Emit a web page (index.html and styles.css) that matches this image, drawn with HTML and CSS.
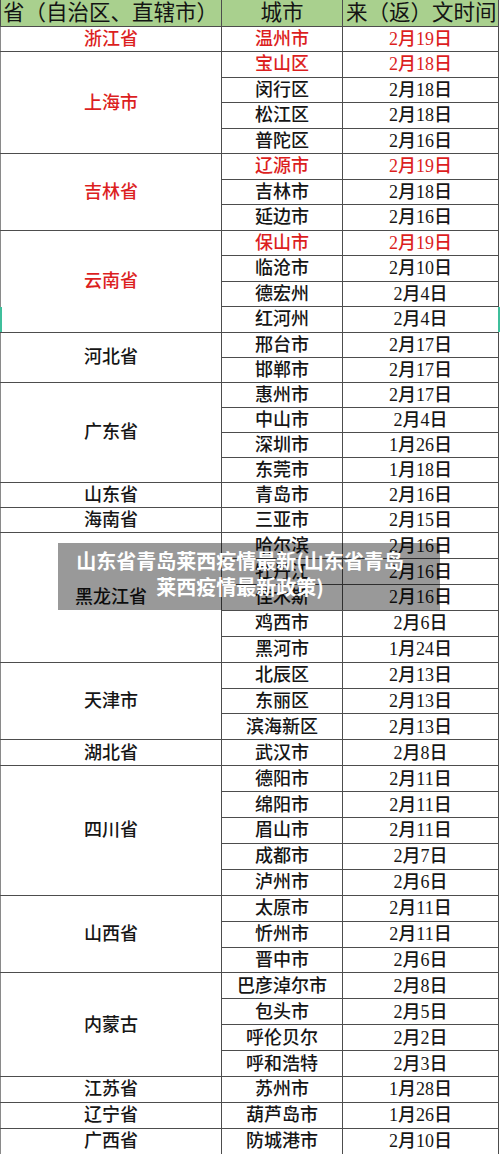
FILE: index.html
```html
<!DOCTYPE html>
<html lang="zh-CN">
<head>
<meta charset="utf-8">
<title>返工时间表</title>
<link rel="stylesheet" href="styles.css">
</head>
<body>
<div class="sheet">
  <table class="grid">
    <colgroup>
      <col class="c1">
      <col class="c2">
      <col class="c3">
    </colgroup>
    <thead>
      <tr class="head">
        <th class="h-prov">省（自治区、直辖市）</th>
        <th>城市</th>
        <th class="h-date">来（返）文时间</th>
      </tr>
    </thead>
    <tbody class="g1">
      <tr><td class="prov red">浙江省</td><td class="red">温州市</td><td class="red">2月19日</td></tr>
      <tr><td class="prov red" rowspan="4">上海市</td><td class="red">宝山区</td><td class="red">2月18日</td></tr>
      <tr><td>闵行区</td><td>2月18日</td></tr>
      <tr><td>松江区</td><td>2月18日</td></tr>
      <tr><td>普陀区</td><td>2月16日</td></tr>
      <tr><td class="prov red" rowspan="3">吉林省</td><td class="red">辽源市</td><td class="red">2月19日</td></tr>
      <tr><td>吉林市</td><td>2月18日</td></tr>
      <tr><td>延边市</td><td>2月16日</td></tr>
      <tr><td class="prov red" rowspan="4">云南省</td><td class="red">保山市</td><td class="red">2月19日</td></tr>
      <tr><td>临沧市</td><td>2月10日</td></tr>
      <tr><td>德宏州</td><td>2月4日</td></tr>
      <tr><td>红河州</td><td>2月4日</td></tr>
    </tbody>
    <tbody class="g2">
      <tr><td class="prov" rowspan="2">河北省</td><td>邢台市</td><td>2月17日</td></tr>
      <tr><td>邯郸市</td><td>2月17日</td></tr>
      <tr><td class="prov" rowspan="4">广东省</td><td>惠州市</td><td>2月17日</td></tr>
      <tr><td>中山市</td><td>2月4日</td></tr>
      <tr><td>深圳市</td><td>1月26日</td></tr>
      <tr><td>东莞市</td><td>1月18日</td></tr>
      <tr><td class="prov">山东省</td><td>青岛市</td><td>2月16日</td></tr>
      <tr><td class="prov">海南省</td><td>三亚市</td><td>2月15日</td></tr>
    </tbody>
    <tbody class="g3">
      <tr><td class="prov" rowspan="5">黑龙江省</td><td>哈尔滨</td><td>2月16日</td></tr>
      <tr><td>牡丹江</td><td>2月16日</td></tr>
      <tr><td>佳木斯</td><td>2月16日</td></tr>
      <tr><td>鸡西市</td><td>2月6日</td></tr>
      <tr><td>黑河市</td><td>1月24日</td></tr>
      <tr><td class="prov" rowspan="3">天津市</td><td>北辰区</td><td>2月13日</td></tr>
      <tr><td>东丽区</td><td>2月13日</td></tr>
      <tr><td>滨海新区</td><td>2月13日</td></tr>
      <tr><td class="prov">湖北省</td><td>武汉市</td><td>2月8日</td></tr>
      <tr><td class="prov" rowspan="5">四川省</td><td>德阳市</td><td>2月11日</td></tr>
      <tr><td>绵阳市</td><td>2月11日</td></tr>
      <tr><td>眉山市</td><td>2月11日</td></tr>
      <tr><td>成都市</td><td>2月7日</td></tr>
      <tr><td>泸州市</td><td>2月6日</td></tr>
      <tr><td class="prov" rowspan="3">山西省</td><td>太原市</td><td>2月11日</td></tr>
      <tr><td>忻州市</td><td>2月11日</td></tr>
      <tr><td>晋中市</td><td>2月6日</td></tr>
      <tr><td class="prov" rowspan="4">内蒙古</td><td>巴彦淖尔市</td><td>2月8日</td></tr>
      <tr><td>包头市</td><td>2月5日</td></tr>
      <tr><td>呼伦贝尔</td><td>2月2日</td></tr>
      <tr><td>呼和浩特</td><td>2月3日</td></tr>
      <tr><td class="prov">江苏省</td><td>苏州市</td><td>1月28日</td></tr>
      <tr><td class="prov">辽宁省</td><td>葫芦岛市</td><td>1月26日</td></tr>
      <tr><td class="prov">广西省</td><td>防城港市</td><td>2月10日</td></tr>
    </tbody>
  </table>

  <span class="sel-mark sel-left"></span>
  <span class="sel-mark sel-right"></span>

  <div class="caption">山东省青岛莱西疫情最新(山东省青岛<br>莱西疫情最新政策)</div>
</div>
</body>
</html>
```

FILE: styles.css
```css
* {
  box-sizing: border-box;
}

html, body {
  margin: 0;
  padding: 0;
  background: #ffffff;
}

body {
  width: 500px;
  height: 1154px;
  overflow: hidden;
  font-family: "Liberation Serif", "Noto Sans CJK SC", serif;
  color: #161616;
}

.sheet {
  position: relative;
  width: 500px;
  height: 1154px;
}

.grid {
  border-collapse: collapse;
  table-layout: fixed;
  width: 498px;
}

.c1 { width: 221px; }
.c2 { width: 121px; }
.c3 { width: 156px; }

.grid td,
.grid th {
  border: 1px solid #4d4d4d;
  padding: 0;
  text-align: center;
  vertical-align: middle;
  white-space: nowrap;
  overflow: hidden;
  font-size: 18px;
  line-height: 20px;
  font-weight: 500;
}

.grid td:first-child {
  border-left-color: #8a8a8a;
}

.head {
  height: 26px;
}

.head th {
  background: #a9d08e;
  border-top: none;
  font-size: 21.5px;
  line-height: 24px;
  font-weight: normal;
  color: #141414;
}

.head .h-prov {
  text-align: left;
  padding-left: 2px;
}

.head .h-date {
  text-align: left;
  padding-left: 3px;
}

.g1 tr { height: 25.5px; }
.g2 tr { height: 25.1px; }
.g3 tr { height: 25.9px; }

.red {
  color: #dc1f1f;
}

.sel-mark {
  position: absolute;
  top: 307px;
  width: 2px;
  height: 25px;
  background: #3fbf9c;
}

.sel-left { left: 0; }
.sel-right { left: 498px; }

.caption {
  position: absolute;
  left: 58px;
  top: 543px;
  width: 382px;
  height: 67px;
  padding: 5px 18px 10px 0;
  background: rgba(0, 0, 0, 0.4);
  color: #ffffff;
  font-family: "Noto Sans CJK SC", "Noto Sans", sans-serif;
  font-weight: bold;
  font-size: 20px;
  line-height: 25.5px;
  text-align: center;
  white-space: nowrap;
}
```
